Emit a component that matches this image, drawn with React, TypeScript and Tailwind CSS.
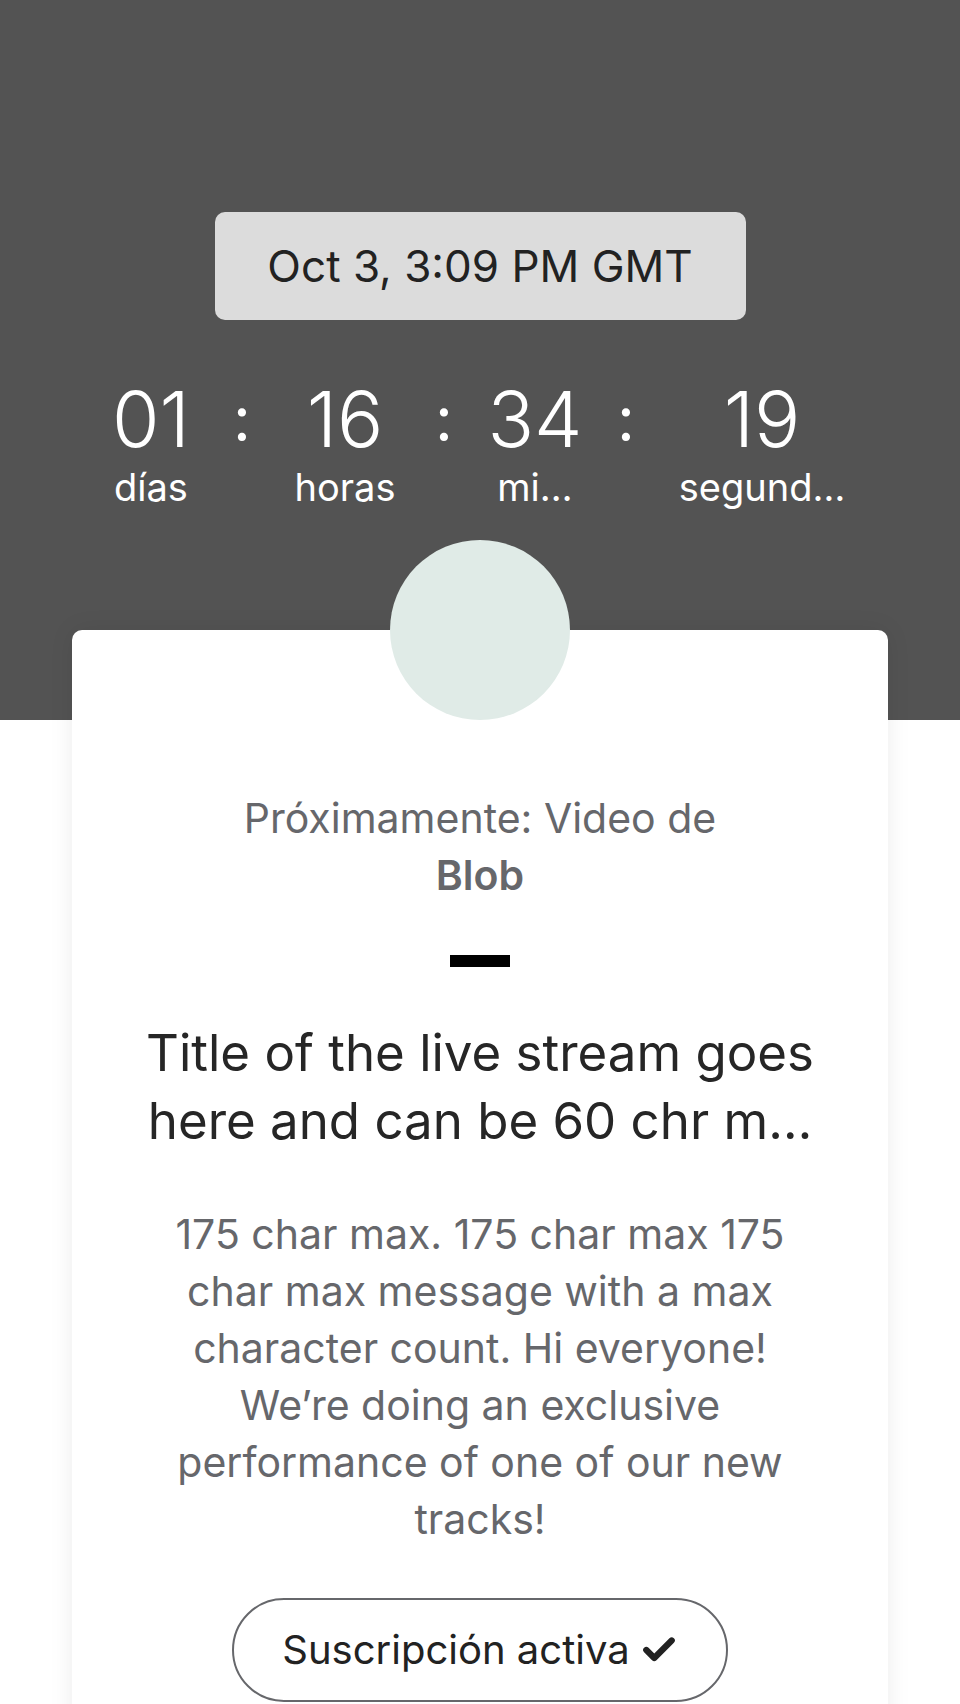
import { Check } from 'lucide-react';

const units = [
  { value: '01', label: 'días', width: 'w-[110px]' },
  { value: '16', label: 'horas', width: 'w-[134px]' },
  { value: '34', label: 'mi…', width: 'w-[118px]' },
  { value: '19', label: 'segund…', width: 'w-[208px]' },
];

const colonWidths = ['w-[72px]', 'w-[64px]', 'w-[64px]'];

function Countdown() {
  return (
    <div className="flex items-start pl-[96px] mt-[58px] text-white">
      {units.map((u, i) => (
        <div key={u.label} className="flex items-start">
          <div className={`${u.width} flex flex-col items-center`}>
            <span className="text-[77px] leading-[82px] font-light">{u.value}</span>
            <span className="mt-[5px] text-[38px] leading-[44px] whitespace-nowrap">{u.label}</span>
          </div>
          {i < colonWidths.length && (
            <div className={`${colonWidths[i]} text-center text-[62px] leading-[82px]`}>:</div>
          )}
        </div>
      ))}
    </div>
  );
}

export default function App() {
  return (
    <div className="min-h-screen bg-white font-['Inter','Noto_Sans',sans-serif] overflow-hidden">
      <header className="h-[720px] bg-[#535353] pt-[212px]">
        <div className="mx-auto w-[531px] h-[108px] rounded-[10px] bg-[#dcdcdc] flex items-center justify-center">
          <span className="text-[44px] text-[#222222]">Oct 3, 3:09 PM GMT</span>
        </div>
        <Countdown />
      </header>

      <main className="relative -mt-[90px] mx-[72px] bg-white rounded-t-[10px] shadow-[0_0_24px_rgba(0,0,0,0.08)] pb-[40px] flex flex-col items-center text-center">
        <div className="-mt-[90px] w-[180px] h-[180px] rounded-full bg-[#e0ebe7]" />

        <p className="mt-[70px] text-[41px] leading-[57px] text-[#66676b]">
          Próximamente: Video de
          <br />
          <span className="font-semibold">Blob</span>
        </p>

        <div className="mt-[51px] w-[60px] h-[12px] bg-black" />

        <h1 className="mt-[52px] text-[51px] leading-[68px] text-[#262626]">
          Title of the live stream goes
          <br />
          here and can be 60 chr m…
        </h1>

        <p className="mt-[51px] w-[680px] text-[41px] leading-[57px] text-[#66676b]">
          175 char max. 175 char max 175 char max message with a max character count. Hi everyone! We’re doing an
          exclusive performance of one of our new tracks!
        </p>

        <button className="mt-[50px] w-[496px] h-[104px] rounded-full border-2 border-[#66676b] flex items-center justify-center gap-[10px] text-[40px] text-[#222222]">
          Suscripción activa
          <Check size={38} strokeWidth={4} />
        </button>
      </main>
    </div>
  );
}
